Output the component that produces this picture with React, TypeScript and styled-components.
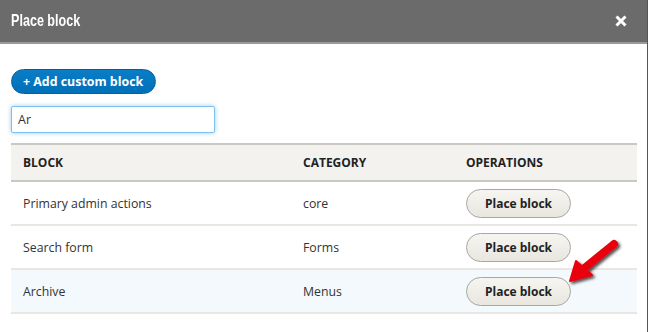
import styled, { createGlobalStyle } from "styled-components";

const Global = createGlobalStyle`
	html, body {
		margin: 0;
		padding: 0;
		background: #fff;
	}
	body {
		font-family: "Open Sans", "DejaVu Sans", sans-serif;
		color: #333;
	}
`;

const Dialog = styled.div`
	position: relative;
	width: 647px;
	height: 332px;
	border-right: 1px solid #555;
	background: #fff;
	overflow: hidden;
`;

const TitleBar = styled.div`
	display: flex;
	align-items: center;
	justify-content: space-between;
	height: 42px;
	padding: 0 19px 0 11px;
	background: #6b6b6b;
	border-bottom: 2px solid #9a9a9a;
	color: #fff;
`;

// the original title font is a condensed sans; squeeze Liberation Sans to match
const Title = styled.h1`
	display: inline-block;
	margin: 0;
	font-family: "Liberation Sans", sans-serif;
	font-size: 17px;
	font-weight: 700;
	transform: scaleX(0.74);
	transform-origin: left center;
`;

const Close = styled.button`
	display: flex;
	align-items: center;
	justify-content: center;
	width: 14px;
	height: 14px;
	padding: 0;
	border: 0;
	background: transparent;
	cursor: pointer;
`;

const Content = styled.div`
	display: flex;
	flex-direction: column;
	align-items: flex-start;
	padding: 25px 13px 0 11px;
`;

const AddButton = styled.button`
	height: 25px;
	padding: 0 12px 0 11px;
	border: 1px solid #0062a0;
	border-radius: 13px;
	background: linear-gradient(#0a7dc6, #0070b8);
	color: #fff;
	font-family: "Open Sans", sans-serif;
	font-size: 12.4px;
	font-weight: 700;
	line-height: 22px;
`;

const Search = styled.input`
	box-sizing: border-box;
	width: 204px;
	height: 27px;
	margin-top: 12px;
	padding: 0 6px;
	border: 1px solid #7fc1ec;
	border-radius: 2px;
	box-shadow: 0 0 4px rgba(64, 160, 235, 0.55);
	outline: none;
	font-family: "Open Sans", sans-serif;
	font-size: 12.5px;
	color: #333;
`;

const Table = styled.table`
	width: 626px;
	margin-top: 10px;
	border-collapse: collapse;
	table-layout: fixed;
`;

const Col = styled.col<{ $w?: number }>`
	width: ${({ $w }) => ($w ? `${$w}px` : "auto")};
`;

const Head = styled.th`
	height: 35px;
	padding: 0 12px;
	background: #f3f2ef;
	border-top: 2px solid #c9c8c3;
	border-bottom: 2px solid #c9c8c3;
	text-align: left;
	font-size: 12px;
	font-weight: 700;
	color: #222;
	text-transform: uppercase;
`;

const Row = styled.tr<{ $active?: boolean }>`
	background: ${({ $active }) => ($active ? "#f4f9fd" : "#fff")};
	border-bottom: 2px solid #e9e7e2;
`;

const Cell = styled.td`
	height: 42px;
	padding: 0 12px;
	font-size: 12.3px;
	color: #333;
`;

const PlaceButton = styled.button`
	height: 29px;
	width: 105px;
	border: 1px solid #a8a8a3;
	border-radius: 15px;
	background: linear-gradient(#f6f5f1, #e8e6df);
	color: #222;
	font-family: "Open Sans", sans-serif;
	font-size: 12px;
	font-weight: 700;
`;

const Arrow = styled.svg`
	position: absolute;
	left: 560px;
	top: 232px;
	overflow: visible;
`;

const rows = [
	{ block: "Primary admin actions", category: "core" },
	{ block: "Search form", category: "Forms" },
	{ block: "Archive", category: "Menus", active: true },
];

export default function App() {
	return (
		<>
			<Global />
			<Dialog>
				<TitleBar>
					<Title>Place block</Title>
					<Close aria-label="Close">
						<svg width="12" height="12" viewBox="0 0 12 12">
							<path d="M1.5 1.5 L10.5 10.5 M10.5 1.5 L1.5 10.5" stroke="#fff" strokeWidth="3" />
						</svg>
					</Close>
				</TitleBar>
				<Content>
					<AddButton>+ Add custom block</AddButton>
					<Search defaultValue="Ar" />
					<Table>
						<colgroup>
							<Col $w={280} />
							<Col $w={163} />
							<Col />
						</colgroup>
						<thead>
							<tr>
								<Head>Block</Head>
								<Head>Category</Head>
								<Head>Operations</Head>
							</tr>
						</thead>
						<tbody>
							{rows.map((r) => (
								<Row key={r.block} $active={r.active}>
									<Cell>{r.block}</Cell>
									<Cell>{r.category}</Cell>
									<Cell>
										<PlaceButton>Place block</PlaceButton>
									</Cell>
								</Row>
							))}
						</tbody>
					</Table>
				</Content>
				<Arrow width="70" height="60" viewBox="0 0 70 60">
					<defs>
						<filter id="sh" x="-30%" y="-30%" width="160%" height="160%">
							<feDropShadow dx="2" dy="2" stdDeviation="1.5" floodColor="#000" floodOpacity="0.7" />
						</filter>
					</defs>
					<g filter="url(#sh)">
						<path d="M54 12 L22 38" stroke="#e8000b" strokeWidth="8" strokeLinecap="round" />
						<path d="M10 49 L16 29 L32 43 Z" fill="#e8000b" stroke="#e8000b" strokeWidth="2" strokeLinejoin="round" />
					</g>
				</Arrow>
			</Dialog>
		</>
	);
}
